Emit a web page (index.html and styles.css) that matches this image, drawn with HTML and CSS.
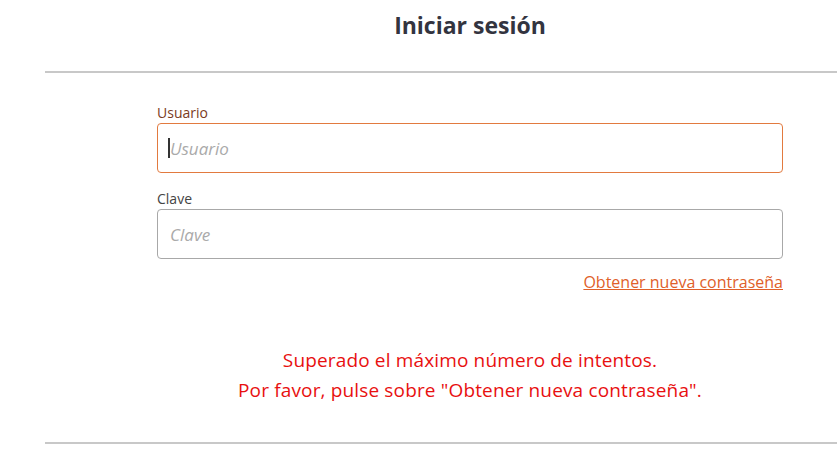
FILE: index.html
```html
<!DOCTYPE html>
<html lang="es">
<head>
<meta charset="utf-8">
<title>Iniciar sesión</title>
<link rel="stylesheet" href="styles.css">
</head>
<body>
<div class="page">
  <h1 class="title">Iniciar sesión</h1>
  <div class="panel">
    <form class="form">
      <label class="label label-active" for="u">Usuario</label>
      <div class="input input-focus"><span class="caret"></span><span class="ph">Usuario</span></div>
      <label class="label" for="c">Clave</label>
      <div class="input"><span class="ph">Clave</span></div>
      <div class="link-row"><a class="link" href="#">Obtener nueva contraseña</a></div>
    </form>
    <div class="error">
      <p>Superado el máximo número de intentos.</p>
      <p>Por favor, pulse sobre "Obtener nueva contraseña".</p>
    </div>
  </div>
</div>
</body>
</html>
```
FILE: styles.css
```css
html, body {
  margin: 0;
  padding: 0;
  background: #fff;
  overflow: hidden;
}
body {
  font-family: "Open Sans", Lato, sans-serif;
  color: #333;
}
.page {
  margin-left: 45px;
}
.title {
  margin: 0;
  height: 71px;
  box-sizing: border-box;
  padding-top: 8px;
  padding-left: 58px;
  text-align: center;
  font-size: 23px;
  font-weight: 700;
  color: #33343f;
  line-height: 34px;
}
.panel {
  border-top: 2px solid #c8c8c8;
  border-bottom: 2px solid #c8c8c8;
  height: 373px;
  box-sizing: border-box;
}
.form {
  width: 626px;
  margin-left: 112px;
  padding-top: 31px;
  display: flex;
  flex-direction: column;
}
.label {
  font-size: 14px;
  line-height: 18px;
  color: #444;
  margin-bottom: 1px;
}
.label-active {
  color: #7b3b1d;
}
.input {
  height: 50px;
  box-sizing: border-box;
  border: 1px solid #a8a8a8;
  border-radius: 4px;
  display: flex;
  align-items: center;
  padding-left: 12px;
  margin-bottom: 17px;
}
.input-focus {
  border-color: #e27a3f;
}
.caret {
  width: 2px;
  height: 20px;
  background: #333;
  margin-left: -2px;
}
.ph {
  font-style: italic;
  font-size: 17px;
  color: #aaa;
}
.link-row {
  display: flex;
  justify-content: flex-end;
  margin-top: -5px;
}
.link {
  font-size: 16px;
  color: #e0602a;
  text-decoration: underline;
}
.error {
  text-align: center;
  margin-top: 52px;
  padding-left: 58px;
  color: #e81010;
  font-size: 19px;
  letter-spacing: 0.15px;
  line-height: 30px;
}
.error p {
  margin: 0;
}
```
